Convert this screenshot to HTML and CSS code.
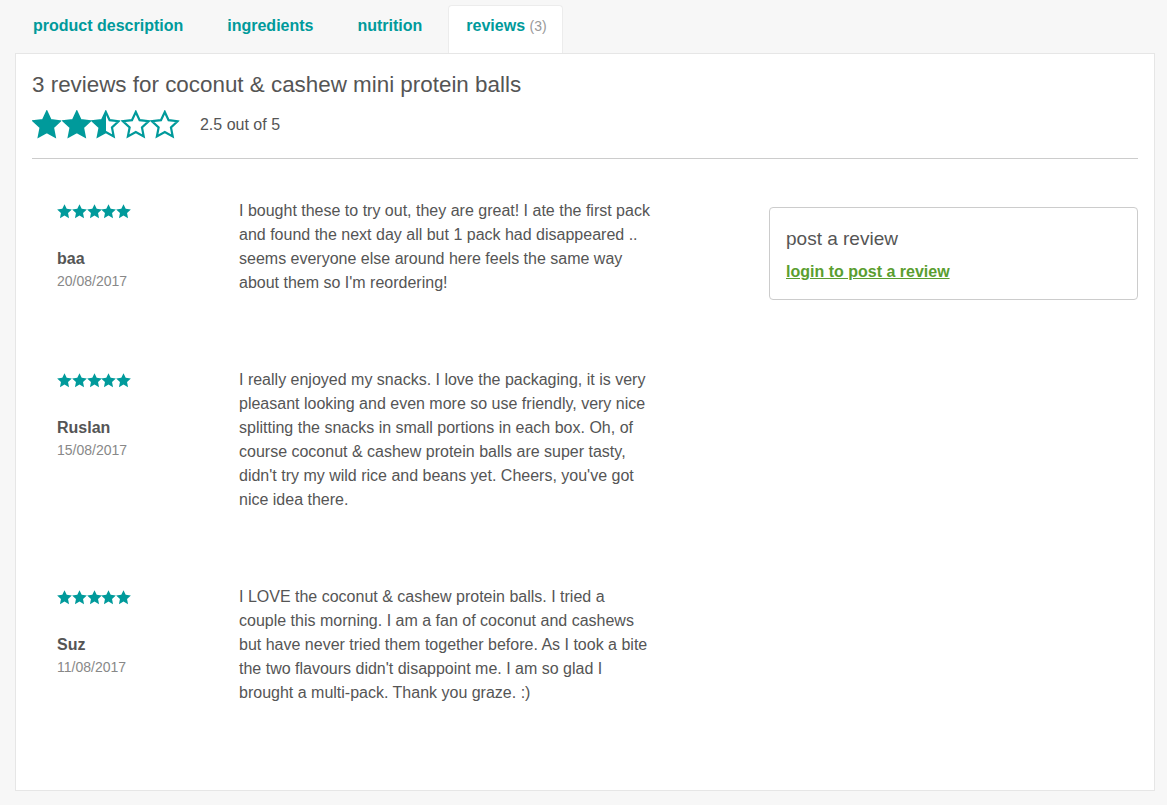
FILE: index.html
```html
<!DOCTYPE html>
<html lang="en">
<head>
<meta charset="utf-8">
<title>Reviews</title>
<link rel="stylesheet" href="styles.css">
</head>
<body>
<svg width="0" height="0" class="defs" aria-hidden="true">
  <defs>
    <linearGradient id="half">
      <stop offset="50%" stop-color="#009a9b"/>
      <stop offset="50%" stop-color="#ffffff"/>
    </linearGradient>
    <symbol id="star" viewBox="0 0 24 24">
      <polygon points="12,1.6 15.1,8.2 22.4,9.1 17,14.1 18.4,21.4 12,17.8 5.6,21.4 7,14.1 1.6,9.1 8.9,8.2"/>
    </symbol>
  </defs>
</svg>
<div class="page">
  <nav class="tabs">
    <a class="tab">product description</a>
    <a class="tab">ingredients</a>
    <a class="tab">nutrition</a>
    <a class="tab active">reviews <span class="count">(3)</span></a>
  </nav>
  <section class="panel">
    <h2 class="title">3 reviews for coconut &amp; cashew mini protein balls</h2>
    <div class="summary">
      <div class="big-stars">
        <svg class="bstar full"><use href="#star"/></svg>
        <svg class="bstar full"><use href="#star"/></svg>
        <svg class="bstar halfs"><use href="#star"/></svg>
        <svg class="bstar empty"><use href="#star"/></svg>
        <svg class="bstar empty"><use href="#star"/></svg>
      </div>
      <span class="avg">2.5 out of 5</span>
    </div>
    <hr class="rule">
    <div class="content">
      <div class="reviews">
        <article class="review">
          <div class="meta">
            <div class="small-stars">
              <svg class="sstar"><use href="#star"/></svg><svg class="sstar"><use href="#star"/></svg><svg class="sstar"><use href="#star"/></svg><svg class="sstar"><use href="#star"/></svg><svg class="sstar"><use href="#star"/></svg>
            </div>
            <div class="name">baa</div>
            <div class="date">20/08/2017</div>
          </div>
          <p class="text">I bought these to try out, they are great! I ate the first pack and found the next day all but 1 pack had disappeared .. seems everyone else around here feels the same way about them so I'm reordering!</p>
        </article>
        <article class="review">
          <div class="meta">
            <div class="small-stars">
              <svg class="sstar"><use href="#star"/></svg><svg class="sstar"><use href="#star"/></svg><svg class="sstar"><use href="#star"/></svg><svg class="sstar"><use href="#star"/></svg><svg class="sstar"><use href="#star"/></svg>
            </div>
            <div class="name">Ruslan</div>
            <div class="date">15/08/2017</div>
          </div>
          <p class="text">I really enjoyed my snacks. I love the packaging, it is very pleasant looking and even more so use friendly, very nice splitting the snacks in small portions in each box. Oh, of course coconut &amp; cashew protein balls are super tasty, didn't try my wild rice and beans yet. Cheers, you've got nice idea there.</p>
        </article>
        <article class="review">
          <div class="meta">
            <div class="small-stars">
              <svg class="sstar"><use href="#star"/></svg><svg class="sstar"><use href="#star"/></svg><svg class="sstar"><use href="#star"/></svg><svg class="sstar"><use href="#star"/></svg><svg class="sstar"><use href="#star"/></svg>
            </div>
            <div class="name">Suz</div>
            <div class="date">11/08/2017</div>
          </div>
          <p class="text">I LOVE the coconut &amp; cashew protein balls. I tried a couple this morning. I am a fan of coconut and cashews but have never tried them together before. As I took a bite the two flavours didn't disappoint me. I am so glad I brought a multi-pack. Thank you graze. :)</p>
        </article>
      </div>
      <aside class="post-box">
        <h3 class="post-title">post a review</h3>
        <a class="login" href="#">login to post a review</a>
      </aside>
    </div>
  </section>
</div>
</body>
</html>
```
FILE: styles.css
```css
html, body {
  margin: 0;
  padding: 0;
  background: #f7f7f7;
  font-family: "Liberation Sans", Arial, sans-serif;
  color: #555;
}
.defs {
  position: absolute;
  width: 0;
  height: 0;
}
.page {
  padding: 5px 12px 0 15px;
}
.tabs {
  display: flex;
  gap: 8px;
  height: 48px;
}
.tab {
  display: block;
  padding: 11px 17px 19px;
  font-size: 16px;
  line-height: 18px;
  font-weight: bold;
  color: #009a9b;
  border: 1px solid transparent;
  border-bottom: none;
  border-radius: 4px 4px 0 0;
  cursor: pointer;
}
.tab.active {
  background: #fff;
  border-color: #ececec;
  position: relative;
  z-index: 1;
  padding-right: 15px;
}
.count {
  font-weight: normal;
  color: #999;
  font-size: 14px;
}
.panel {
  background: #fff;
  border: 1px solid #e6e6e6;
  padding: 18px 16px 12px;
}
.title {
  margin: 0;
  font-size: 22.4px;
  line-height: 26px;
  font-weight: normal;
  color: #555;
}
.summary {
  display: flex;
  align-items: center;
  margin-top: 12px;
  height: 29px;
}
.big-stars {
  display: flex;
}
.bstar {
  width: 29.6px;
  height: 29.6px;
  stroke: #009a9b;
  stroke-width: 1.8;
  stroke-linejoin: miter;
}
.bstar.full {
  fill: #009a9b;
}
.bstar.halfs {
  fill: url(#half);
}
.bstar.empty {
  fill: #fff;
}
.avg {
  margin-left: 20px;
  font-size: 16px;
  color: #555;
}
.rule {
  border: none;
  border-top: 1px solid #cccccc;
  margin: 19px 0 0;
}
.content {
  display: grid;
  grid-template-columns: 1fr 369px;
  padding-top: 40px;
}
.review {
  display: grid;
  grid-template-columns: 182px 414px;
  padding-left: 25px;
  margin-bottom: 73px;
}
.meta {
  padding-top: 4px;
}
.small-stars {
  display: flex;
  height: 17px;
  margin-left: -1px;
}
.sstar {
  width: 17px;
  height: 17px;
  margin-right: -2.2px;
  fill: #009a9b;
}
.name {
  margin-top: 30px;
  font-size: 16px;
  line-height: 18px;
  font-weight: bold;
  color: #555;
}
.date {
  margin-top: 5px;
  font-size: 14px;
  line-height: 16px;
  color: #888;
}
.text {
  margin: 0;
  font-size: 16px;
  line-height: 24px;
  color: #555;
}
.post-box {
  align-self: start;
  margin-top: 8px;
  border: 1px solid #cccccc;
  border-radius: 4px;
  padding: 19px 16px 17px;
}
.post-title {
  margin: 0;
  font-size: 19px;
  line-height: 24px;
  font-weight: normal;
  color: #555;
}
.login {
  display: block;
  margin-top: 11px;
  font-size: 16px;
  line-height: 20px;
  font-weight: bold;
  color: #5a9e2f;
  text-decoration: underline;
}
```
